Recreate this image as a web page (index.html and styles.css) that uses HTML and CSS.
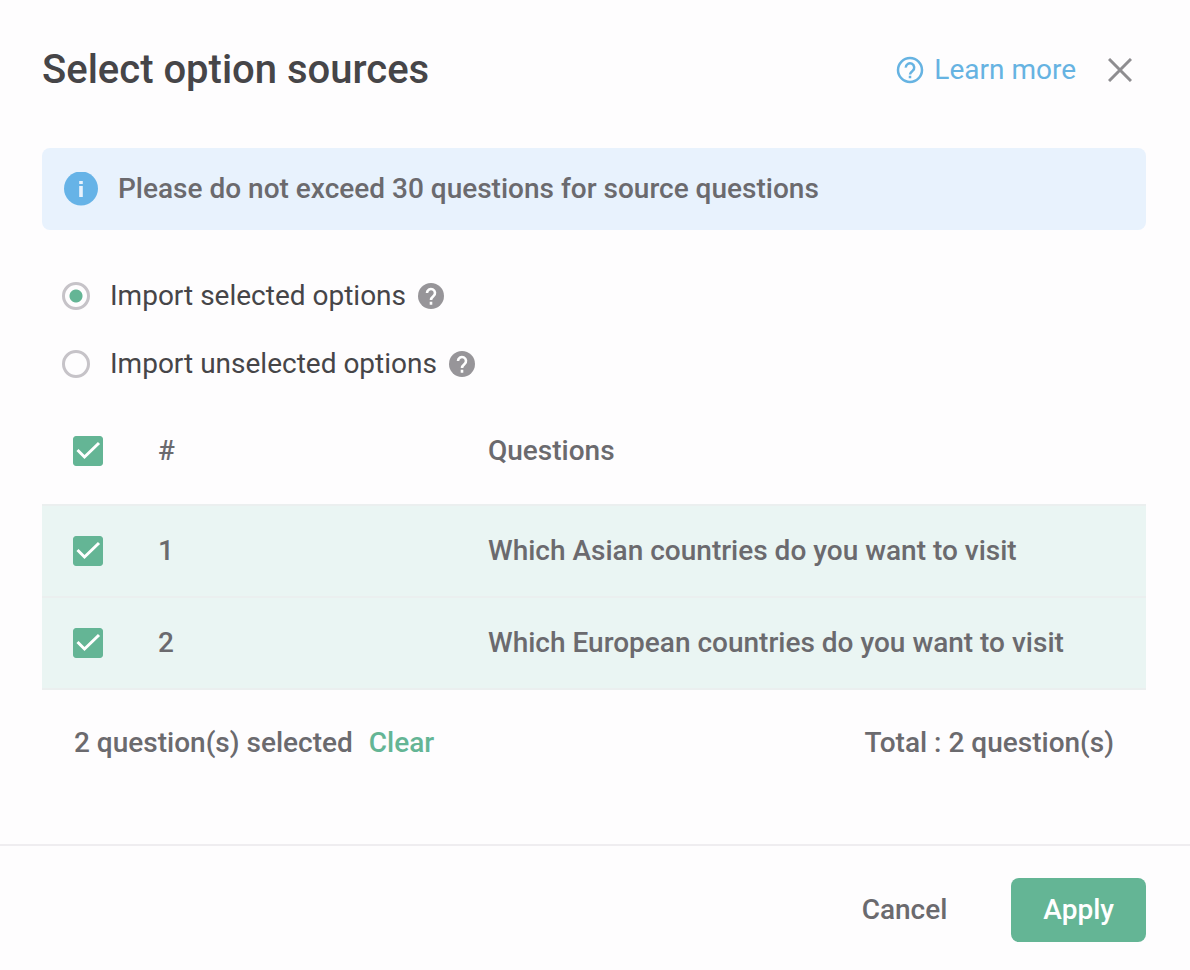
FILE: index.html
```html
<!DOCTYPE html>
<html lang="en">
  <head>
    <meta charset="UTF-8" />
    <meta name="viewport" content="width=device-width, initial-scale=1.0" />
    <title>Select option sources</title>
    <link rel="stylesheet" href="styles.css">
  </head>
  <body>
    <form class="modal" id="sourceForm">
      <header class="modal-header">
        <h1 class="modal-title">Select option sources</h1>
        <a class="learn-more" href="#">
          <svg width="28" height="28" viewBox="0 0 28 28" fill="none" stroke="currentColor" stroke-width="2.500" aria-hidden="true">
            <circle cx="14" cy="14" r="12" />
            <path d="M9.800 11.600a4.200 4.200 0 1 1 6.800 3.200c-1.600 1.200-2.600 1.900-2.600 3.700M14 19.700v2.600" />
          </svg>
          Learn more
        </a>
        <button type="button" class="close" aria-label="Close">
          <svg width="24" height="24" viewBox="0 0 24 24" fill="none" stroke="currentColor" stroke-width="3">
            <path d="M1 1L23 23M23 1L1 23" />
          </svg>
        </button>
      </header>

      <main class="modal-body">
        <div class="notice">
          <svg width="34" height="34" viewBox="0 0 34 34" aria-hidden="true">
            <circle cx="17" cy="16.500" r="17" fill="#66b3e7" />
            <path d="M15.200 9h3.600v3h-3.600zM15.200 14h3.600v11h-3.600z" fill="#e8f2fd" />
          </svg>
          <p>Please do not exceed 30 questions for source questions</p>
        </div>

        <div class="options">
          <div class="option">
            <input type="radio" id="selected" name="import" checked />
            <label for="selected">Import selected options</label>
            <svg class="help" width="26" height="26" viewBox="0 0 26 26" fill="none" aria-hidden="true">
              <circle cx="13" cy="13" r="13" fill="currentColor" />
              <path d="M9 10a4 4 0 1 1 6.500 3.100c-1.500 1.200-2.500 1.900-2.500 3.900M13 18.800v3" stroke="#fff" stroke-width="2.600" />
            </svg>
          </div>
          <div class="option">
            <input type="radio" id="unselected" name="import" />
            <label for="unselected">Import unselected options</label>
            <svg class="help" width="26" height="26" viewBox="0 0 26 26" fill="none" aria-hidden="true">
              <circle cx="13" cy="13" r="13" fill="currentColor" />
              <path d="M9 10a4 4 0 1 1 6.500 3.100c-1.500 1.200-2.500 1.900-2.500 3.900M13 18.800v3" stroke="#fff" stroke-width="2.600" />
            </svg>
          </div>
        </div>

        <table class="questions">
          <thead>
            <tr>
              <th class="col-check"><input type="checkbox" aria-label="Select all" checked /></th>
              <th class="col-number">#</th>
              <th>Questions</th>
            </tr>
          </thead>
          <tbody>
            <tr>
              <td class="col-check"><input type="checkbox" aria-label="Select question 1" checked /></td>
              <td>1</td>
              <td>Which Asian countries do you want to visit</td>
            </tr>
            <tr>
              <td class="col-check"><input type="checkbox" aria-label="Select question 2" checked /></td>
              <td>2</td>
              <td>Which European countries do you want to visit</td>
            </tr>
          </tbody>
        </table>

        <div class="summary">
          <span>2 question(s) selected</span>
          <button type="button" class="clear">Clear</button>
          <span class="total">Total : 2 question(s)</span>
        </div>
      </main>

      <footer class="modal-footer">
        <button type="button" class="btn">Cancel</button>
        <button type="submit" class="btn btn-primary">Apply</button>
      </footer>
    </form>
  </body>
</html>
```

FILE: styles.css
```css
*,
*::after,
*::before {
  margin: 0;
  padding: 0;
  box-sizing: border-box;
}

body {
  font-family: Roboto, Arial, sans-serif;
  font-size: 28px;
  line-height: 36px;
  color: #6b6a6e;
  background: #fefdfe;
}

svg {
  display: block;
  flex-shrink: 0;
}

button {
  font: inherit;
  color: inherit;
  border: 0;
  background: none;
  cursor: pointer;
}

.modal {
  display: flex;
  flex-direction: column;
  min-height: 100vh;
}

.modal-header {
  display: flex;
  align-items: center;
  padding: 44px 58px 0 42px;
}

.modal-title {
  flex: 1;
  font-size: 40px;
  font-weight: 500;
  line-height: 52px;
  color: #464548;
}

.learn-more {
  display: flex;
  align-items: center;
  gap: 10px;
  color: #66b3e2;
  text-decoration: none;
}

.close {
  margin-left: 32px;
  color: #8e8d90;
}

.modal-body {
  flex: 1;
  padding: 52px 44px 0 42px;
  font-weight: 500;
}

.notice {
  display: flex;
  align-items: center;
  gap: 20px;
  min-height: 82px;
  padding: 12px 22px;
  border-radius: 8px;
  background: #e8f2fd;
}

/* import mode */
.options {
  display: flex;
  flex-direction: column;
  gap: 32px;
  padding: 48px 20px 0;
  font-weight: 400;
  color: #464548;
}

.option {
  display: flex;
  align-items: center;
}

.option label {
  margin: 0 12px 0 20px;
}

.option input {
  appearance: none;
  width: 28px;
  height: 28px;
  border: 3px solid #c6c3c8;
  border-radius: 50%;
}

.option input:checked {
  background: radial-gradient(circle, #64b595 6px, transparent 7px);
}

.help {
  color: #979599;
}

/* question list */
.questions {
  width: 100%;
  margin-top: 16px;
  border-spacing: 0;
  table-layout: fixed;
  text-align: left;
}

.questions th,
.questions td {
  height: 92px;
  padding: 0 16px;
  font-weight: 500;
  border-bottom: 2px solid #ebefef;
}

.questions th {
  height: 108px;
}

.questions td {
  background: #eaf5f3;
}

.questions .col-check {
  width: 100px;
  padding: 0 0 0 31px;
}

.col-number {
  width: 330px;
}

.questions input {
  display: block;
  appearance: none;
  width: 30px;
  height: 30px;
  border: 1px solid #64b595;
  border-radius: 3px;
}

.questions input:checked {
  background: #64b595 url("data:image/svg+xml,%3Csvg xmlns='http://www.w3.org/2000/svg' viewBox='0 0 30 30'%3E%3Cpath d='M4.500 14L11.500 21L26 7' fill='none' stroke='%23fff' stroke-width='3'/%3E%3C/svg%3E") center / 30px 30px no-repeat;
}

.summary {
  display: flex;
  align-items: center;
  gap: 16px;
  padding: 35px 32px;
}

.clear {
  color: #64b595;
}

.total {
  margin-left: auto;
}

.modal-footer {
  display: flex;
  justify-content: flex-end;
  gap: 32px;
  padding: 32px 44px 28px;
  border-top: 2px solid #efedf0;
}

.btn {
  height: 64px;
  padding: 0 32px;
  border-radius: 8px;
  font-weight: 500;
}

.btn-primary {
  background: #64b595;
  color: #fff;
}
```
